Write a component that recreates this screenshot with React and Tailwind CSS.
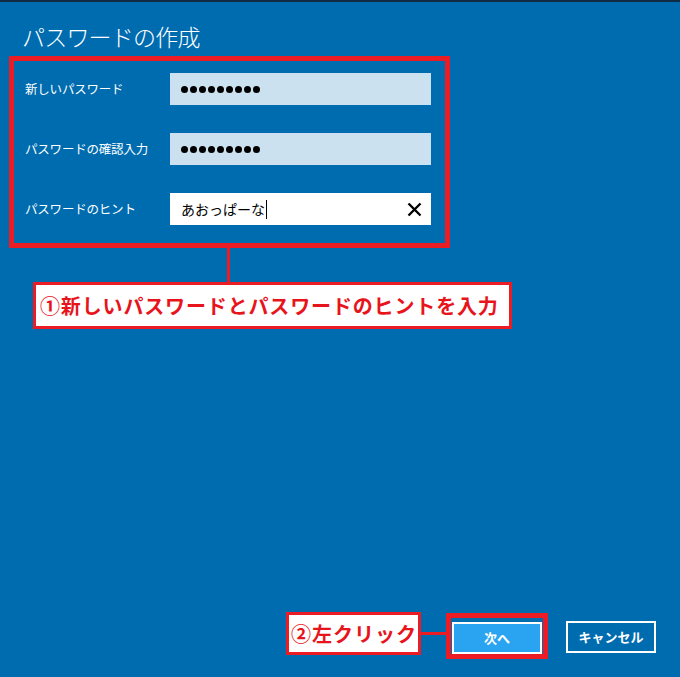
import React from 'react';

const RED = 'border-[#ec1c24]';

const Dots = () => (
  <div className="flex items-center gap-[2px]">
    {Array.from({ length: 9 }).map((_, i) => (
      <span key={i} className="block w-[7px] h-[7px] rounded-full bg-black" />
    ))}
  </div>
);

const Row = ({ label, children, white }) => (
  <div className="flex items-center h-[32px]">
    <div className="w-[145px] text-[12.5px] text-white leading-none tracking-[-0.2px]">{label}</div>
    <div
      className={`flex items-center w-[261px] h-[32px] pl-[11px] pr-[9px] ${
        white ? 'bg-white' : 'bg-[#cce1ef]'
      }`}
    >
      {children}
    </div>
  </div>
);

export default function App() {
  return (
    <div
      className="w-[680px] h-[677px] bg-[#006cb0] flex flex-col overflow-hidden"
      style={{ fontFamily: '"Noto Sans CJK JP", "Noto Sans", sans-serif' }}
    >
      <div className="h-[2px] bg-[#0f2a44]" />

      {/* Title */}
      <div className="h-[54px] pl-[22px] pt-[19px]">
        <h1 className="text-[23px] font-light text-white leading-[30px] tracking-[-0.8px]">パスワードの作成</h1>
      </div>

      {/* Input group with red frame */}
      <div className={`ml-[9px] w-[441px] h-[192px] border-[5px] ${RED} pl-[11px] pt-[12px] flex flex-col gap-[28px]`}>
        <Row label="新しいパスワード">
          <Dots />
        </Row>
        <Row label="パスワードの確認入力">
          <Dots />
        </Row>
        <Row label="パスワードのヒント" white>
          <span className="text-[14px] text-black leading-none">あおっぱーな</span>
          <span className="block w-px h-[19px] bg-black ml-px" />
          <svg className="ml-auto" width="15" height="15" viewBox="0 0 15 15">
            <path d="M1.5 1.5 L13.5 13.5 M13.5 1.5 L1.5 13.5" stroke="#000" strokeWidth="2.4" />
          </svg>
        </Row>
      </div>

      {/* Connector */}
      <div className="ml-[227px] w-[3px] h-[34px] bg-[#ec1c24]" />

      {/* Callout 1 */}
      <div className={`ml-[33px] w-[479px] h-[47px] border-[3px] ${RED} bg-white flex items-center pl-[4px]`}>
        <span className="text-[20px] font-bold text-[#e8141c] leading-none tracking-[0.85px]">
          ①新しいパスワードとパスワードのヒントを入力
        </span>
      </div>

      {/* Bottom buttons */}
      <div className="mt-auto flex items-start pr-[24px] pb-[18px] justify-end">
        <div className={`mt-[-1px] w-[135px] h-[43px] border-[3px] ${RED} bg-white flex items-center pl-[2px]`}>
          <span className="text-[20px] font-bold text-[#e8141c] leading-none tracking-[1px]">②左クリック</span>
        </div>
        <div className="mt-[19px] w-[27px] h-[3px] bg-[#ec1c24] -ml-px" />
        <div className={`w-[102px] h-[46px] border-[5px] ${RED} flex items-center justify-center -ml-px`}>
          <button className="w-[90px] h-[32px] mt-[4px] border-2 border-white bg-[#2aa4f0] text-white text-[13px] font-bold">
            次へ
          </button>
        </div>
        <button className="ml-[18px] mt-[8px] w-[90px] h-[32px] border-2 border-white text-white text-[13px] font-bold">
          キャンセル
        </button>
      </div>
    </div>
  );
}
